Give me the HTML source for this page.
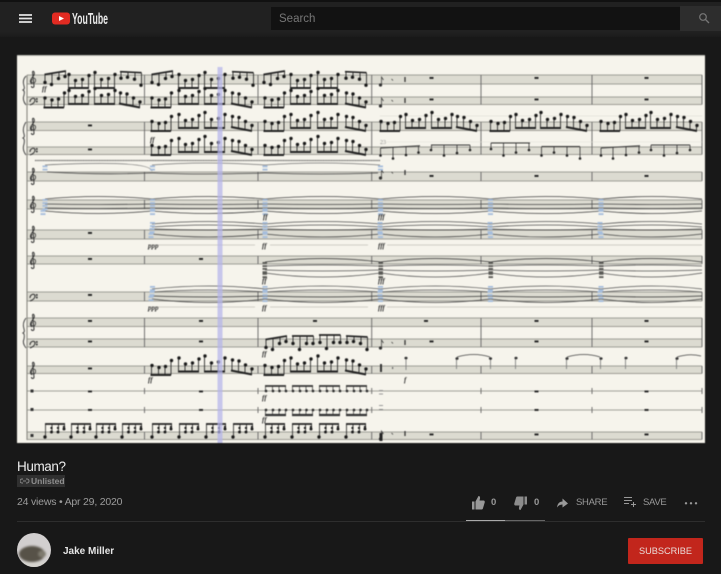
<!DOCTYPE html>
<html><head><meta charset="utf-8"><title>Human?</title>
<style>
html,body{margin:0;padding:0;background:#181818;width:721px;height:574px;overflow:hidden;font-family:"Liberation Sans",sans-serif}
.a{position:absolute;white-space:nowrap}
#top{left:0;top:0;width:721px;height:2px;background:#111}
#hd{left:0;top:2px;width:721px;height:35px;background:linear-gradient(#212121 0,#212121 85%,#1b1b1b 100%)}
#paper{left:0;top:0}
</style></head><body>
<div class="a" id="top"></div><div class="a" id="hd"></div>
<svg class="a" style="left:0;top:0" width="721" height="40">
<path d="M19 15h13M19 18.500h13M19 22h13" stroke="#e4e4e4" stroke-width="1.700"/>
<rect x="52" y="12.500" width="18" height="12" rx="3" fill="#e22b22"/><path d="M59 16l5 2.500-5 2.500z" fill="#fff"/>
<text x="72" y="24" font-family="Liberation Sans" font-weight="bold" font-size="16" textLength="36" lengthAdjust="spacingAndGlyphs" fill="#e8e8e8">YouTube</text>
<rect x="271" y="7" width="409" height="23" fill="#121212"/><rect x="680" y="6" width="41" height="25" fill="#2d2d2d"/>
<text x="279" y="22" font-family="Liberation Sans" font-size="11.500" fill="#777">Search</text>
<circle cx="703" cy="17" r="3.300" fill="none" stroke="#777" stroke-width="1.200"/><path d="M705.500 19.500l3.500 3.500" stroke="#777" stroke-width="1.300"/>
</svg>
<svg class="a" id="paper" width="721" height="574" style="filter:blur(.45px)" font-family="Liberation Serif">
<defs>
<g id="t1" stroke="#222" stroke-width=".85" fill="#111"><path d="M.500 2.500L22 -1" stroke-width="1.700"/><path d="M1 2.500V10M8 1.500V12M15 .300V6M21.500 -1V4"/><circle cx="1" cy="10.500" r="1.300"/><circle cx="7.500" cy="12.500" r="1.300"/><circle cx="14.500" cy="6.500" r="1.300"/><circle cx="21" cy="4.500" r="1.300"/></g>
<g id="t4" stroke="#222" stroke-width=".85" fill="#111"><path d="M0 0L21.500 1" stroke-width="1.700"/><path d="M1 0V6M8 .300V5M15 .600V7M21.500 1V13"/><circle cx="1" cy="6.500" r="1.300"/><circle cx="7.500" cy="5.500" r="1.300"/><circle cx="14.500" cy="7.500" r="1.300"/><circle cx="21" cy="13.500" r="1.300"/></g>
<g id="t2" stroke="#222" stroke-width=".85" fill="#111"><path d="M0 0H21.500" stroke-width="1.700"/><path d="M1 0V7M8 0V13M15 0V7M21.500 0V7"/><circle cx="1" cy="7.500" r="1.300"/><circle cx="7.500" cy="13.500" r="1.300"/><circle cx="14.500" cy="7.500" r="1.300"/><circle cx="21" cy="7.500" r="1.300"/></g>
<g id="b1" stroke="#222" stroke-width=".85" fill="#111"><path d="M.500 0H21" stroke-width="2.100"/><path d="M1.500 0V-9M8.500 0V-7M15 0V-8M21 0V-14"/><circle cx="2" cy="-9.500" r="1.300"/><circle cx="9" cy="-7.500" r="1.300"/><circle cx="15.500" cy="-8.500" r="1.300"/><circle cx="21.500" cy="-14.500" r="1.300"/></g>
<g id="b2" stroke="#222" stroke-width=".85" fill="#111"><path d="M0 0H21" stroke-width="2.100"/><path d="M.500 0V-13M7 0V-7M14 0V-8M20.500 0V-12"/><circle cx="1" cy="-13.500" r="1.300"/><circle cx="7.500" cy="-7.500" r="1.300"/><circle cx="14.500" cy="-8.500" r="1.300"/><circle cx="21" cy="-12.500" r="1.300"/></g>
<g id="b3" stroke="#222" stroke-width=".85" fill="#111"><path d="M0 0H21" stroke-width="2.100"/><path d="M.500 0V-15M7 0V-8M14 0V-9M20.500 0V-13"/><circle cx="1" cy="-15.500" r="1.300"/><circle cx="7.500" cy="-8.500" r="1.300"/><circle cx="14.500" cy="-9.500" r="1.300"/><circle cx="21" cy="-13.500" r="1.300"/></g>
<g id="b4" stroke="#222" stroke-width=".85" fill="#111"><path d="M0 0L21 4" stroke-width="2.100"/><path d="M1 0V-10M7.500 1V-9M14 2.600V-5M20.500 4V-1"/><circle cx="1.500" cy="-10.500" r="1.300"/><circle cx="8" cy="-9.500" r="1.300"/><circle cx="14.500" cy="-5.500" r="1.300"/><circle cx="21" cy="-1.500" r="1.300"/></g>
<g id="p" stroke="#222" stroke-width=".8" fill="#111"><path d="M0 0H20" stroke-width="1.800"/><path d="M.500 0V13M7 0V8M13.500 0V8M19.500 0V5"/><circle cx="0" cy="13" r="1.300"/><circle cx="6.500" cy="8" r="1.100"/><circle cx="13" cy="8" r="1.100"/><circle cx="19" cy="5" r="1.100"/><circle cx="6.500" cy="4" r=".8"/><circle cx="13" cy="4" r=".8"/><circle cx="19" cy="3" r=".8"/></g>
<g id="n13" stroke="#333" stroke-width=".7" fill="#222"><path d="M0 0H21" stroke-width="1.800"/><path d="M.500 0V5M7.500 0V5M14 0V5M20.500 0V5"/><circle cx="1" cy="5" r="1"/><circle cx="8" cy="5" r="1"/><circle cx="14.500" cy="5" r="1"/><circle cx="21" cy="5" r="1"/></g>
<g id="n14" stroke="#333" stroke-width=".7" fill="#222"><path d="M0 0H21" stroke-width="2.200"/><path d="M.500 0V-5M7.500 0V-5M14 0V-5M20.500 0V-5"/><circle cx="1" cy="-5" r="1"/><circle cx="8" cy="-5" r="1"/><circle cx="14.500" cy="-5" r="1"/><circle cx="21" cy="-5" r="1"/></g>
<g id="tc" fill="none" stroke="#333" stroke-width="1"><path d="M1 9C-3 6 2 2 3 0C4 -3 2 -5 1.500 -3L3 11C3 13 0 13 .5 11"/><path d="M2.500 3C5.500 3 5 8 2.500 8C0 8 -.5 5 1.500 4.500" stroke-width=".8"/></g>
<g id="bc" fill="none" stroke="#333" stroke-width="1.100"><path d="M0 5C0 1 5 0 5 3C5 5 3 7 0 8"/><circle cx="6.800" cy="2" r=".4" fill="#333"/><circle cx="6.800" cy="4.500" r=".4" fill="#333"/></g>
<g id="blue" fill="#a5bddc"><rect x="-2.500" y="0" width="5" height="1.800"/><rect x="-2.500" y="3.200" width="5" height="1.800"/></g>
<g id="dark" fill="#5a5a56"><rect x="-2.500" y="0" width="4.500" height="1.800"/><rect x="-2.500" y="3.200" width="4.500" height="1.800"/></g>
<g id="r"><rect x="-2" y="0" width="4" height="1.900" fill="#222"/></g>
<g id="hit" fill="#333" stroke="#333" stroke-width=".7"><circle cx="0" cy="8" r="1.300"/><path d="M1 8V0l2 3" fill="none"/><path d="M11 2l1.500 1.500" fill="none"/><path d="M24.500 0V5" stroke-width="1.300"/></g>
<g id="t6" fill="none" stroke="#444" stroke-width=".8"><path d="M0 199Q50 194 100 199"/><path d="M0 204Q50 205 100 204"/><path d="M0 208Q50 209 100 208"/><path d="M0 211Q50 216 100 211"/></g>
<g id="t7" fill="none" stroke="#555" stroke-width=".8"><path d="M0 224Q50 219 100 224"/><path d="M0 227Q50 223 100 227"/><path d="M0 229Q50 231 100 229" stroke="#333"/><path d="M0 234Q50 240 100 234" stroke="#444"/></g>
<g id="t8" fill="none" stroke="#555" stroke-width=".8"><path d="M0 262Q50 255 100 262" stroke="#333"/><path d="M0 266Q50 264 100 266"/><path d="M0 270Q50 272 100 270"/><path d="M0 273Q50 281 100 273"/></g>
<g id="t9" fill="none" stroke="#555" stroke-width=".8"><path d="M0 289Q50 283 100 289"/><path d="M0 292Q50 288 100 292"/><path d="M0 296Q50 298 100 296" stroke="#333"/><path d="M0 299Q50 306 100 299" stroke="#444"/></g>
</defs>
<rect x="17" y="55" width="688" height="388" fill="#f6f4ec"/>
<rect x="17" y="55" width="688" height="1" fill="#bdbcb5"/>
<!-- staff fills -->
<g fill="#dcdbd1">
<rect x="27" y="75" width="675" height="9"/><rect x="27" y="97" width="675" height="7.500"/>
<rect x="27" y="122" width="675" height="8.500"/><rect x="27" y="147" width="675" height="7.500"/>
<rect x="27" y="172" width="675" height="9"/><rect x="27" y="200" width="675" height="9"/>
<rect x="27" y="230" width="675" height="9"/><rect x="27" y="256" width="675" height="8"/>
<rect x="27" y="292" width="675" height="9"/><rect x="27" y="318" width="675" height="8.500"/>
<rect x="27" y="339" width="675" height="8"/><rect x="27" y="366" width="675" height="7.500"/>
<rect x="27" y="432" width="675" height="7.500"/>
</g>
<g stroke="#85857f" stroke-width=".7">
<path d="M27 75H702M27 84H702M27 97H702M27 104.500H702M27 122H702M27 130.500H702M27 147H702M27 154.500H702M27 172H702M27 181H702M27 200H702M27 209H702M27 230H702M27 239H702M27 256H702M27 264H702M27 292H702M27 301H702M27 318H702M27 326.500H702M27 339H702M27 347H702M27 366H702M27 373.500H702M27 391H702M27 410H702M27 432H702M27 439.500H702"/>
</g>
<path d="M27 75V440" stroke="#888880" stroke-width="1.100"/>
<g stroke="#666" stroke-width=".9">
<path d="M144.500 75V104.500M144.500 122V154.500M144.500 172V181M144.500 200V209M144.500 230V239M144.500 256V264M144.500 292V301M144.500 318V347M144.500 366V373.500M144.500 388V394M144.500 407V413M144.500 432V439.500"/>
<path d="M258 75V104.500M258 122V154.500M258 172V181M258 200V209M258 230V239M258 256V264M258 292V301M258 318V347M258 366V373.500M258 388V394M258 407V413M258 432V439.500"/>
<path d="M371.700 75V104.500M371.700 122V154.500M371.700 172V181M371.700 200V209M371.700 230V239M371.700 256V264M371.700 292V301M371.700 318V347M371.700 366V373.500M371.700 388V394M371.700 407V413M371.700 432V439.500"/>
<path d="M481 75V104.500M481 122V154.500M481 172V181M481 200V209M481 230V239M481 256V264M481 292V301M481 318V347M481 366V373.500M481 388V394M481 407V413M481 432V439.500"/>
<path d="M592 75V104.500M592 122V154.500M592 172V181M592 200V209M592 230V239M592 256V264M592 292V301M592 318V347M592 366V373.500M592 388V394M592 407V413M592 432V439.500"/>
<path d="M702 75V104.500M702 122V154.500M702 172V181M702 200V209M702 230V239M702 256V264M702 292V301M702 318V347M702 366V373.500M702 388V394M702 407V413M702 432V439.500"/>
</g>
<!-- braces -->
<g fill="none" stroke="#444" stroke-width="1">
<path d="M26 76Q22 80 24 86Q25 89 23 90Q25 91 24 95Q22 100 26 105"/>
<path d="M26 122Q22 128 24 134Q25 137 23 138Q25 139 24 144Q22 150 26 155"/>
<path d="M26 318Q22 323 24 329Q25 332 23 333Q25 334 24 339Q22 343 26 348"/>
</g>
<!-- clefs -->
<use href="#tc" x="31" y="75"/><use href="#bc" x="30" y="97"/><use href="#tc" x="31" y="122"/><use href="#bc" x="30" y="147"/><use href="#tc" x="31" y="172"/><use href="#tc" x="31" y="200"/><use href="#tc" x="31" y="230"/><use href="#tc" x="31" y="256"/><use href="#bc" x="30" y="293"/><use href="#tc" x="31" y="318"/><use href="#bc" x="30" y="340"/><use href="#tc" x="31" y="366"/>
<g fill="#333"><rect x="30.500" y="389.500" width="3" height="3"/><rect x="30.500" y="408" width="3" height="3"/><rect x="30.500" y="434" width="3" height="3"/></g>
<!-- rests -->
<use href="#r" x="90" y="124.500"/><use href="#r" x="90" y="148.500"/><use href="#r" x="90" y="232"/><use href="#r" x="90" y="258"/><use href="#r" x="90" y="294"/><use href="#r" x="90" y="320"/><use href="#r" x="90" y="340.500"/><use href="#r" x="90" y="367.500"/><use href="#r" x="90" y="390.500"/><use href="#r" x="90" y="409"/>
<use href="#r" x="201" y="258"/><use href="#r" x="201" y="320"/><use href="#r" x="201" y="340.500"/><use href="#r" x="201" y="390.500"/><use href="#r" x="201" y="409"/><use href="#r" x="315" y="320"/>
<use href="#r" x="431.500" y="77"/><use href="#r" x="431.500" y="98.500"/><use href="#r" x="431.500" y="175"/><use href="#r" x="431.500" y="340.500"/><use href="#r" x="431.500" y="433.500"/><use href="#r" x="426" y="320"/>
<use href="#r" x="536.500" y="77"/><use href="#r" x="536.500" y="98.500"/><use href="#r" x="536.500" y="175"/><use href="#r" x="536.500" y="320"/><use href="#r" x="536.500" y="340.500"/><use href="#r" x="536.500" y="390.500"/><use href="#r" x="536.500" y="409"/><use href="#r" x="536.500" y="433.500"/>
<use href="#r" x="646.500" y="77"/><use href="#r" x="646.500" y="98.500"/><use href="#r" x="646.500" y="175"/><use href="#r" x="646.500" y="320"/><use href="#r" x="646.500" y="340.500"/><use href="#r" x="646.500" y="390.500"/><use href="#r" x="646.500" y="409"/><use href="#r" x="646.500" y="433.500"/>
<!-- m4 hits -->
<use href="#hit" x="380.500" y="77"/><use href="#hit" x="380.500" y="98"/><use href="#hit" x="380.500" y="170"/><use href="#hit" x="380.500" y="340"/><use href="#hit" x="380.500" y="431"/>
<rect x="379.500" y="433" width="3" height="8" fill="#222"/>
<rect x="380" y="364" width="2" height="8" fill="#333"/><rect x="392" y="367" width="1.200" height="2" fill="#666"/>
<rect x="379" y="390" width="4" height="1" fill="#999"/><rect x="379" y="393.500" width="4" height="1" fill="#999"/><rect x="379" y="405" width="4" height="1" fill="#999"/><rect x="379" y="409" width="4" height="1.200" fill="#888"/>
<text x="380" y="124" font-size="6" fill="#999">8</text><text x="380" y="144" font-size="6" fill="#888">23</text>
<path d="M380 116H702" stroke="#d8d7cf" stroke-width=".5"/><path d="M380 142H702" stroke="#e0dfd7" stroke-width=".5"/>
<!-- staff 1 -->
<g>
<use href="#t1" x="44" y="72"/><use href="#b2" x="68" y="88"/><use href="#b3" x="94" y="88"/><use href="#t4" x="120" y="71.700"/>
<use href="#t1" x="151" y="72"/><use href="#b2" x="178" y="88"/><use href="#b3" x="204" y="88"/><use href="#t4" x="232" y="71.700"/>
<use href="#t1" x="263" y="72"/><use href="#b2" x="290" y="88"/><use href="#b3" x="317" y="88"/><use href="#t4" x="345" y="71.700"/>
<!-- staff 2 -->
<use href="#b1" x="43" y="107.500"/><use href="#b2" x="68" y="104"/><use href="#b3" x="94" y="104"/><use href="#b4" x="119" y="103.500"/>
<use href="#b1" x="150" y="107.500"/><use href="#b2" x="178" y="104"/><use href="#b3" x="204" y="104"/><use href="#b4" x="231" y="103.500"/>
<use href="#b1" x="263" y="107.500"/><use href="#b2" x="290" y="104"/><use href="#b3" x="317" y="104"/><use href="#b4" x="345" y="103.500"/>
<!-- staff 3 -->
<use href="#b1" x="150" y="131"/><use href="#b2" x="178" y="128"/><use href="#b3" x="204" y="128"/><use href="#b4" x="231" y="127"/>
<use href="#b1" x="263" y="131"/><use href="#b2" x="290" y="128"/><use href="#b3" x="317" y="128"/><use href="#b4" x="345" y="127"/>
<use href="#b1" x="379" y="131"/><use href="#b2" x="405" y="128"/><use href="#b3" x="431" y="128"/><use href="#b4" x="456" y="127"/>
<use href="#b1" x="489" y="131"/><use href="#b2" x="515" y="128"/><use href="#b3" x="540" y="128"/><use href="#b4" x="566" y="127"/>
<use href="#b1" x="599" y="131"/><use href="#b2" x="625" y="128"/><use href="#b3" x="650" y="128"/><use href="#b4" x="676" y="127"/>
<!-- staff 4 -->
<use href="#b1" x="150" y="155"/><use href="#b2" x="178" y="152"/><use href="#b3" x="204" y="152"/><use href="#b4" x="231" y="151"/>
<use href="#b1" x="263" y="155"/><use href="#b2" x="290" y="152"/><use href="#b3" x="317" y="152"/><use href="#b4" x="345" y="151"/>
</g>
<g fill="none" stroke="#333" stroke-width=".8">
<path d="M380.500 148L420 145.700" stroke-width="1"/><path d="M380.500 148V155M393 147.500V158M406 146.500V155M418.500 146V153"/>
<path d="M431 145H470" stroke-width="1"/><path d="M431.500 145V150M444 145V156M457 145V153M470 145V150"/>
<path d="M491 143H530" stroke-width="1"/><path d="M491 143V149M503.500 143V156M516 143V153M529 143V150"/>
<path d="M541.500 146.500H580" stroke-width="1"/><path d="M541.500 147V156M554 147V153M567 147V156M580 147V158"/>
<path d="M601 148L640 145.700" stroke-width="1"/><path d="M601 148V155M613 147.500V158M626 146.500V155M639 146V153"/>
<path d="M651 145H690" stroke-width="1"/><path d="M651 145V150M664 145V156M677 145V153M690 145V150"/>
</g>
<g fill="#222"><circle cx="380.500" cy="155.500" r="1.300"/><circle cx="393" cy="158.500" r="1.300"/><circle cx="406" cy="155" r="1.300"/><circle cx="418.500" cy="152.500" r="1.300"/><circle cx="431" cy="150" r="1.300"/><circle cx="444" cy="155.500" r="1.300"/><circle cx="457" cy="153" r="1.300"/><circle cx="470" cy="150" r="1.300"/><circle cx="491" cy="149" r="1.300"/><circle cx="503.500" cy="155.500" r="1.300"/><circle cx="516" cy="152.500" r="1.300"/><circle cx="529" cy="150" r="1.300"/><circle cx="541.500" cy="155.500" r="1.300"/><circle cx="554" cy="152.500" r="1.300"/><circle cx="567" cy="155.500" r="1.300"/><circle cx="580" cy="158.500" r="1.300"/><circle cx="601" cy="155.500" r="1.300"/><circle cx="613" cy="158.500" r="1.300"/><circle cx="626" cy="155" r="1.300"/><circle cx="639" cy="152.500" r="1.300"/><circle cx="651" cy="150" r="1.300"/><circle cx="664" cy="155.500" r="1.300"/><circle cx="677" cy="153" r="1.300"/><circle cx="690" cy="150" r="1.300"/></g>
<!-- trill and staff 5 -->
<path d="M35 160.500H380" stroke="#555" stroke-width="1.300" stroke-dasharray="1 .6"/>
<g fill="none" stroke="#777" stroke-width=".8"><path d="M45 165Q150 160 152 171"/><path d="M47 172Q100 175 152 173" stroke="#444"/><path d="M152 165Q205 161 265 165"/><path d="M152 173Q205 175 265 173" stroke="#444"/><path d="M265 165Q320 161 380 165"/><path d="M265 173Q320 175 378 173" stroke="#444"/></g>
<use href="#blue" x="45" y="165.500"/><use href="#blue" x="152.500" y="165.500"/><use href="#blue" x="265" y="165.500"/><use href="#blue" x="380.500" y="165.500"/>
<!-- ties -->
<g>
<use href="#t6" transform="translate(45 0) scale(1.07 1)"/><use href="#t6" transform="translate(152 0) scale(1.13 1)"/><use href="#t6" transform="translate(265 0) scale(1.155 1)"/><use href="#t6" transform="translate(380.500 0) scale(1.1 1)"/><use href="#t6" transform="translate(490.500 0) scale(1.105 1)"/><use href="#t6" transform="translate(601 0) scale(1.01 1)"/>
<use href="#t7" transform="translate(152 0) scale(1.13 1)"/><use href="#t7" transform="translate(265 0) scale(1.155 1)"/><use href="#t7" transform="translate(380.500 0) scale(1.1 1)"/><use href="#t7" transform="translate(490.500 0) scale(1.105 1)"/><use href="#t7" transform="translate(601 0) scale(1.01 1)"/>
<use href="#t8" transform="translate(265 0) scale(1.155 1)"/><use href="#t8" transform="translate(380.500 0) scale(1.1 1)"/><use href="#t8" transform="translate(490.500 0) scale(1.105 1)"/><use href="#t8" transform="translate(601 0) scale(1.01 1)"/>
<use href="#t9" transform="translate(152 0) scale(1.13 1)"/><use href="#t9" transform="translate(265 0) scale(1.155 1)"/><use href="#t9" transform="translate(380.500 0) scale(1.1 1)"/><use href="#t9" transform="translate(490.500 0) scale(1.105 1)"/><use href="#t9" transform="translate(601 0) scale(1.01 1)"/>
</g>
<!-- note columns -->
<g>
<use href="#blue" x="45" y="199"/><use href="#blue" x="45" y="205"/><use href="#blue" x="43" y="210"/>
<use href="#blue" x="152.500" y="199"/><use href="#blue" x="152.500" y="205"/><use href="#blue" x="152.500" y="210"/>
<use href="#blue" x="265" y="199"/><use href="#blue" x="265" y="205"/><use href="#blue" x="265" y="210"/>
<use href="#blue" x="380.500" y="199"/><use href="#blue" x="380.500" y="205"/><use href="#blue" x="380.500" y="210"/>
<use href="#blue" x="490.500" y="199"/><use href="#blue" x="490.500" y="205"/><use href="#blue" x="490.500" y="210"/>
<use href="#blue" x="601" y="199"/><use href="#blue" x="601" y="205"/><use href="#blue" x="601" y="210"/>
<use href="#blue" x="152.500" y="222"/><use href="#blue" x="152" y="228"/><use href="#blue" x="151" y="233"/>
<use href="#blue" x="265" y="222"/><use href="#blue" x="265" y="228"/><use href="#blue" x="265" y="233"/>
<use href="#blue" x="380" y="222"/><use href="#blue" x="380" y="228"/><use href="#blue" x="380.500" y="233"/>
<use href="#blue" x="490" y="222"/><use href="#blue" x="490" y="228"/><use href="#blue" x="490.500" y="233"/>
<use href="#blue" x="600" y="222"/><use href="#blue" x="600" y="228"/><use href="#blue" x="601" y="233"/>
<use href="#dark" x="265" y="262"/><use href="#dark" x="265" y="268"/><use href="#dark" x="265" y="273"/>
<use href="#dark" x="381" y="262"/><use href="#dark" x="381" y="268"/><use href="#dark" x="381" y="273"/>
<use href="#dark" x="491" y="262"/><use href="#dark" x="491" y="268"/><use href="#dark" x="491" y="273"/>
<use href="#dark" x="601.500" y="262"/><use href="#dark" x="601.500" y="268"/><use href="#dark" x="601.500" y="273"/>
<use href="#blue" x="152.500" y="286"/><use href="#blue" x="152" y="291"/><use href="#blue" x="151" y="296"/>
<use href="#blue" x="265" y="286"/><use href="#blue" x="265" y="291"/><use href="#blue" x="265" y="297"/>
<use href="#blue" x="380.500" y="286"/><use href="#blue" x="380" y="291"/><use href="#blue" x="380.500" y="297"/>
<use href="#blue" x="490.500" y="286"/><use href="#blue" x="490" y="291"/><use href="#blue" x="490.500" y="297"/>
<use href="#blue" x="601" y="286"/><use href="#blue" x="600" y="291"/><use href="#blue" x="601" y="297"/>
</g>
<!-- dynamics -->
<g font-weight="bold" font-style="italic" font-size="7" fill="#333">
<text x="42" y="91">ff</text><text x="150" y="142">ff</text>
<text x="263" y="219">ff</text><text x="378" y="219">fff</text>
<text x="148" y="248">ppp</text><text x="262" y="248">ff</text><text x="378" y="248">fff</text>
<text x="262" y="283">ff</text><text x="378" y="283">fff</text>
<text x="148" y="310">ppp</text><text x="262" y="310">ff</text><text x="378" y="310">fff</text>
<text x="262" y="356">ff</text><text x="148" y="382">ff</text><text x="262" y="400">ff</text><text x="262" y="422">ff</text><text x="404" y="382">f</text>
</g>
<path d="M158 245H255M270 245H368M387 245H702M158 307H255M270 307H368M387 307H702" stroke="#cfcec6" stroke-width="1"/>
<!-- staff 11 -->
<use href="#t1" x="265" y="337"/><use href="#t2" x="292" y="336"/><use href="#t2" x="319" y="335"/><use href="#t4" x="346" y="336"/>
<!-- staff 12 -->
<use href="#b1" x="150" y="375"/><use href="#b2" x="178" y="371.500"/><use href="#b3" x="204" y="371.500"/><use href="#b4" x="231" y="370.500"/>
<use href="#b1" x="263" y="375"/><use href="#b2" x="290" y="371.500"/><use href="#b3" x="317" y="371.500"/><use href="#b4" x="345" y="370.500"/>
<g fill="#333" stroke="#777" stroke-width=".8"><path d="M406 357V370M456.500 358V369M490.500 358V369M515.500 357V369M566.500 358V369M600.500 358V369M625.500 357V369M676.500 358V369"/>
<g stroke="none"><ellipse cx="406" cy="358" rx="1.600" ry="1.300"/><ellipse cx="457" cy="358.500" rx="1.600" ry="1.300"/><ellipse cx="490.500" cy="358.500" rx="1.600" ry="1.300"/><ellipse cx="516" cy="358" rx="1.600" ry="1.300"/><ellipse cx="567" cy="358.500" rx="1.600" ry="1.300"/><ellipse cx="601" cy="358.500" rx="1.600" ry="1.300"/><ellipse cx="626" cy="358" rx="1.600" ry="1.300"/><ellipse cx="677" cy="358.500" rx="1.600" ry="1.300"/></g></g>
<g fill="none" stroke="#444" stroke-width=".7"><path d="M457 357Q474 352 490 357M567 357Q584 352 600 357M677 357Q690 353 701 356"/></g>
<!-- staff 13,14,15 -->
<use href="#n13" x="265" y="386"/><use href="#n13" x="292" y="386"/><use href="#n13" x="319" y="386"/><use href="#n13" x="346" y="386"/>
<use href="#n14" x="265" y="415"/><use href="#n14" x="292" y="415"/><use href="#n14" x="319" y="415"/><use href="#n14" x="346" y="415"/>
<use href="#p" x="45" y="424"/><use href="#p" x="71" y="424"/><use href="#p" x="96" y="424"/><use href="#p" x="122" y="424"/>
<use href="#p" x="152" y="424"/><use href="#p" x="179" y="424"/><use href="#p" x="206" y="424"/><use href="#p" x="233" y="424"/>
<use href="#p" x="265" y="424"/><use href="#p" x="292" y="424"/><use href="#p" x="319" y="424"/><use href="#p" x="346" y="424"/>
<rect x="217.500" y="67" width="5" height="376" fill="#b4b4ea" opacity=".72"/>
</svg>
<div class="a" style="left:17px;top:459px;font-size:13.500px;letter-spacing:-.4px;line-height:16px;color:#eee">Human?</div>
<div class="a" style="left:17px;top:475px;width:48px;height:12px;background:#303030"></div>
<svg class="a" style="left:20px;top:478px" width="10" height="6"><path d="M3 1H2a2 2 0 0 0 0 4h1M6 1h1a2 2 0 0 1 0 4H6M3 3h3" fill="none" stroke="#888" stroke-width="1"/></svg>
<div class="a" style="left:31px;top:475px;font-size:8.500px;font-weight:bold;line-height:12px;color:#8f8f8f">Unlisted</div>
<div class="a" style="left:17px;top:495px;font-size:10.500px;line-height:14px;color:#9c9c9c;letter-spacing:-.2px">24 views • Apr 29, 2020</div>
<div class="a" style="left:17px;top:521px;width:688px;height:1px;background:#2e2e2e"></div>
<div class="a" style="left:466px;top:519.500px;width:39px;height:1.500px;background:#aaa"></div>
<div class="a" style="left:505px;top:519.500px;width:40px;height:1.500px;background:#666"></div>
<svg class="a" style="left:0;top:490px" width="721" height="84">
<path transform="translate(0 4.500)" d="M472 7h2.500v8H472zM475.500 15V7l3-5.500c1.500 0 1.800 1.500 1.400 3l-.4 1.500h4c1 0 1.500 1 1.200 2l-1.800 6c-.2.600-.6 1-1.200 1z" fill="#999"/>
<path transform="translate(0 3.500)" d="M524.500 3h2.500v8h-2.500zM523.500 3v8l-3 5.500c-1.500 0-1.800-1.500-1.400-3l.4-1.500h-4c-1 0-1.500-1-1.200-2l1.800-6c.2-.6.600-1 1.200-1z" fill="#8c8c8c"/>
<path transform="translate(0 2.500)" d="M568 11l-5.500-5v3c-3 0-5 2-5.500 6 1.300-2 3-3 5.500-3v3z" fill="#999"/>
<path d="M624 7.500h8M624 10.500h8M624 13.500h5M631 14.500h5M633.500 12v5" stroke="#999" stroke-width="1" fill="none"/>
<g fill="#999"><circle cx="686" cy="13.300" r="1.200"/><circle cx="691" cy="13.300" r="1.200"/><circle cx="696" cy="13.300" r="1.200"/></g>
<clipPath id="av"><circle cx="34" cy="60" r="17"/></clipPath>
<g clip-path="url(#av)"><rect x="17" y="43" width="34" height="34" fill="#d2cfcf"/><g style="filter:blur(1px)"><ellipse cx="32" cy="64" rx="13" ry="8" fill="#575248"/><ellipse cx="42" cy="64" rx="4" ry="3.500" fill="#7e7a6e"/><rect x="17" y="72" width="34" height="6" fill="#d5d3ce"/></g></g>
</svg>
<div class="a" style="left:63px;top:545px;font-size:10px;font-weight:bold;line-height:14px;color:#e6e6e6">Jake Miller</div>
<div class="a" style="left:491px;top:496px;font-size:9.500px;line-height:14px;color:#999;font-weight:bold">0</div>
<div class="a" style="left:534px;top:496px;font-size:9.500px;line-height:14px;color:#999;font-weight:bold">0</div>
<div class="a" style="left:576px;top:495.500px;font-size:9.500px;letter-spacing:-.3px;line-height:14px;color:#999">SHARE</div>
<div class="a" style="left:643px;top:495.500px;font-size:9.500px;letter-spacing:-.3px;line-height:14px;color:#999">SAVE</div>
<div class="a" style="left:628px;top:538px;width:75px;height:26px;background:#c2261c;border-radius:1px;text-align:center;font-size:9.200px;line-height:27px;color:#eadcd9">SUBSCRIBE</div>
</body></html>
